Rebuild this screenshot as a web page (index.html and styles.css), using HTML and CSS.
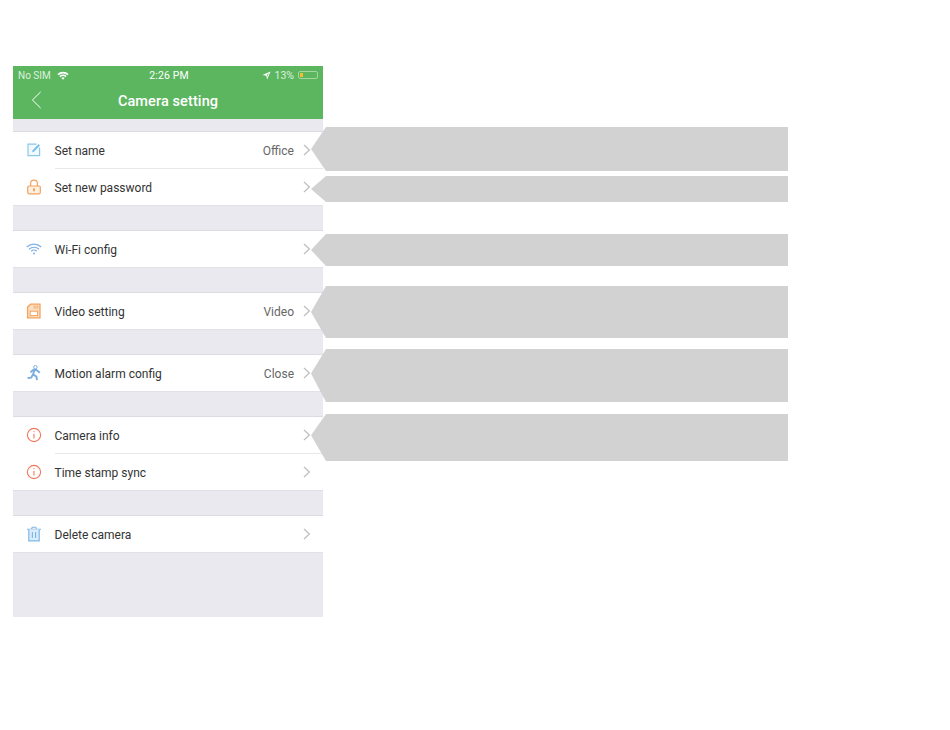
FILE: index.html
```html
<!DOCTYPE html>
<html lang="en">
<head>
    <meta charset="UTF-8">
    <meta name="viewport" content="width=device-width, initial-scale=1.0">
    <title>Camera setting</title>
    <link rel="stylesheet" href="styles.css">
</head>
<body>
    <div class="phone">
        <div class="header">
            <div class="status-bar">
                <div class="status-left">
                    <span>No SIM</span>
                    <svg class="wifi-small" width="12" height="9" viewBox="0 0 12 9">
                        <path d="M0.4 3 A8 8 0 0 1 11.6 3 L10.4 4.3 A6.3 6.3 0 0 0 1.6 4.3 Z" fill="#fff"/>
                        <path d="M2.4 5 A5.2 5.2 0 0 1 9.6 5 L8.5 6.2 A3.6 3.6 0 0 0 3.5 6.2 Z" fill="#fff"/>
                        <path d="M4.4 7 A2.4 2.4 0 0 1 7.6 7 L6 8.8 Z" fill="#fff"/>
                    </svg>
                </div>
                <div class="status-time">2:26 PM</div>
                <div class="status-right">
                    <svg width="9" height="9" viewBox="0 0 9 9">
                        <path d="M8.6 0.4 L0.4 3.9 L4.3 4.7 L5.1 8.6 Z M7 2 L5 4 L5.3 5.8 Z" fill="#fff" fill-rule="evenodd"/>
                    </svg>
                    <span>13%</span>
                    <div class="battery"><div class="battery-level"></div></div>
                </div>
            </div>
            <div class="nav-bar">
                <svg class="back" width="11" height="18" viewBox="0 0 11 18">
                    <path d="M9.6 1 L1.4 9 L9.6 17" fill="none" stroke="#fff" stroke-width="1"/>
                </svg>
                <h1>Camera setting</h1>
            </div>
        </div>

        <div class="group first">
            <div class="row">
                <svg class="icon" width="16" height="16" viewBox="0 0 16 16">
                    <path d="M10.6 2.2 H2 V13.6 H13.6 V5.4" fill="#f2f9fd" stroke="#8cc8ea" stroke-width="1.2"/>
                    <path d="M6.2 10.2 L6.6 8.2 L12.6 2 L14 3.4 L8 9.8 Z" fill="#7dbfe8"/>
                </svg>
                <div class="row-body">
                    <span class="label">Set name</span>
                    <span class="value">Office</span>
                    <svg class="chevron" width="8" height="12" viewBox="0 0 8 12"><path d="M1 1 L6.4 6 L1 11" fill="none" stroke="#bdbdc2" stroke-width="1.2"/></svg>
                </div>
            </div>
            <div class="row">
                <svg class="icon" width="16" height="16" viewBox="0 0 16 16">
                    <path d="M4.6 7 V4.6 A3.4 3.4 0 0 1 11.4 4.6 V7" fill="none" stroke="#f3a25c" stroke-width="1.2"/>
                    <rect x="1.7" y="7" width="12.6" height="7.8" rx="1.2" fill="#fdf0e2" stroke="#f3a25c" stroke-width="1.2"/>
                    <path d="M8 9.2 V12.2" stroke="#ef9445" stroke-width="1.6"/>
                </svg>
                <div class="row-body">
                    <span class="label">Set new password</span>
                    <svg class="chevron" width="8" height="12" viewBox="0 0 8 12"><path d="M1 1 L6.4 6 L1 11" fill="none" stroke="#bdbdc2" stroke-width="1.2"/></svg>
                </div>
            </div>
        </div>

        <div class="group">
            <div class="row">
                <svg class="icon" width="16" height="16" viewBox="0 0 16 16">
                    <path d="M0.8 6 A10.5 10.5 0 0 1 15.2 6" fill="none" stroke="#7fb0e6" stroke-width="1.2"/>
                    <path d="M3 8.2 A7.4 7.4 0 0 1 13 8.2" fill="none" stroke="#7fb0e6" stroke-width="1.2"/>
                    <path d="M5.2 10.3 A4 4 0 0 1 10.8 10.3" fill="none" stroke="#7fb0e6" stroke-width="1.2"/>
                    <circle cx="8" cy="12.4" r="1" fill="#7fb0e6"/>
                </svg>
                <div class="row-body">
                    <span class="label">Wi-Fi config</span>
                    <svg class="chevron" width="8" height="12" viewBox="0 0 8 12"><path d="M1 1 L6.4 6 L1 11" fill="none" stroke="#bdbdc2" stroke-width="1.2"/></svg>
                </div>
            </div>
        </div>

        <div class="group">
            <div class="row">
                <svg class="icon" width="16" height="16" viewBox="0 0 16 16">
                    <path d="M4.6 1.2 H14 V14.8 H1.6 V4 Z" fill="#fbdfc4" stroke="#f3a25c" stroke-width="1.3"/>
                    <rect x="4.2" y="8.2" width="7.4" height="4.4" fill="#fff" stroke="#f3a25c"/>
                    <path d="M8.2 2.6 V5.6 M10 2.6 V5.6 M11.8 2.6 V5.6" stroke="#f3a25c" stroke-width="0.9"/>
                </svg>
                <div class="row-body">
                    <span class="label">Video setting</span>
                    <span class="value">Video</span>
                    <svg class="chevron" width="8" height="12" viewBox="0 0 8 12"><path d="M1 1 L6.4 6 L1 11" fill="none" stroke="#bdbdc2" stroke-width="1.2"/></svg>
                </div>
            </div>
        </div>

        <div class="group">
            <div class="row">
                <svg class="icon" width="16" height="16" viewBox="0 0 16 16">
                    <circle cx="9.4" cy="2.2" r="1.7" fill="none" stroke="#7aaee0" stroke-width="1"/>
                    <path d="M4.4 7.4 L7.4 4.8 L10.4 5 L13.8 7.8 M8.6 5 L7 9.4 L10.4 11.6 L11 15.2 M7 9.6 L5.2 12.6 L1.6 13" fill="none" stroke="#7aaee0" stroke-width="1.9"/>
                </svg>
                <div class="row-body">
                    <span class="label">Motion alarm config</span>
                    <span class="value">Close</span>
                    <svg class="chevron" width="8" height="12" viewBox="0 0 8 12"><path d="M1 1 L6.4 6 L1 11" fill="none" stroke="#bdbdc2" stroke-width="1.2"/></svg>
                </div>
            </div>
        </div>

        <div class="group">
            <div class="row">
                <svg class="icon" width="16" height="16" viewBox="0 0 16 16">
                    <circle cx="8" cy="8" r="6.6" fill="none" stroke="#f0785a" stroke-width="1.1"/>
                    <path d="M8 6.8 V11.6" stroke="#f0785a" stroke-width="1.1"/>
                    <circle cx="8" cy="4.6" r="0.7" fill="#f0785a"/>
                </svg>
                <div class="row-body">
                    <span class="label">Camera info</span>
                    <svg class="chevron" width="8" height="12" viewBox="0 0 8 12"><path d="M1 1 L6.4 6 L1 11" fill="none" stroke="#bdbdc2" stroke-width="1.2"/></svg>
                </div>
            </div>
            <div class="row">
                <svg class="icon" width="16" height="16" viewBox="0 0 16 16">
                    <circle cx="8" cy="8" r="6.6" fill="none" stroke="#f0785a" stroke-width="1.1"/>
                    <path d="M8 6.8 V11.6" stroke="#f0785a" stroke-width="1.1"/>
                    <circle cx="8" cy="4.6" r="0.7" fill="#f0785a"/>
                </svg>
                <div class="row-body">
                    <span class="label">Time stamp sync</span>
                    <svg class="chevron" width="8" height="12" viewBox="0 0 8 12"><path d="M1 1 L6.4 6 L1 11" fill="none" stroke="#bdbdc2" stroke-width="1.2"/></svg>
                </div>
            </div>
        </div>

        <div class="group last">
            <div class="row">
                <svg class="icon" width="16" height="16" viewBox="0 0 16 16">
                    <path d="M1 3.2 H15 M5.6 3 L6.2 1.2 H9.8 L10.4 3" fill="none" stroke="#7db8e8" stroke-width="1.1"/>
                    <path d="M2.8 3.4 V14.8 H13.2 V3.4" fill="#dcecfa" stroke="#7db8e8" stroke-width="1.2"/>
                    <path d="M6.4 6 V12 M9.6 6 V12" stroke="#7db8e8" stroke-width="1.2"/>
                </svg>
                <div class="row-body">
                    <span class="label">Delete camera</span>
                    <svg class="chevron" width="8" height="12" viewBox="0 0 8 12"><path d="M1 1 L6.4 6 L1 11" fill="none" stroke="#bdbdc2" stroke-width="1.2"/></svg>
                </div>
            </div>
        </div>
    </div>

    <!-- grey pointers that cover the original notes -->
    <div class="callout c1"></div>
    <div class="callout c2"></div>
    <div class="callout c3"></div>
    <div class="callout c4"></div>
    <div class="callout c5"></div>
    <div class="callout c6"></div>
</body>
</html>
```

FILE: styles.css
```css
body {
    margin: 0;
    background-color: #ffffff;
    font-family: Roboto, "Liberation Sans", sans-serif;
    color: #333333;
}
.phone {
    width: 310px;
    height: 551px;
    margin: 66px 0 0 13px;
    background-color: #ebe9f0;
}
.header {
    height: 53px;
    background-color: #5cb65f;
    color: #ffffff;
}
.status-bar {
    height: 18px;
    padding: 0 5px;
    display: flex;
    align-items: center;
    justify-content: space-between;
    font-size: 10px;
    color: #dff0df;
}
.status-left, .status-right {
    width: 100px;
    display: flex;
    align-items: center;
    gap: 6px;
}
.status-right {
    justify-content: flex-end;
    gap: 4px;
}
.status-right span {
    font-size: 10.5px;
}
.status-time {
    margin-left: 2px;
    font-size: 10.5px;
    letter-spacing: 0.1px;
    color: #ffffff;
}
.battery {
    width: 20px;
    height: 8px;
    border: 1px solid #a5d6a0;
    border-radius: 2px;
    padding: 1px;
    box-sizing: border-box;
}
.battery-level {
    width: 3px;
    height: 100%;
    background-color: #f5c02c;
}
.nav-bar {
    height: 35px;
    display: flex;
    align-items: center;
    justify-content: center;
    position: relative;
}
.nav-bar h1 {
    margin: -1px 0 0;
    font-size: 14.5px;
    font-weight: 500;
    letter-spacing: 0.1px;
}
.back {
    position: absolute;
    left: 18px;
    top: 7px;
}
.group {
    margin-top: 24px;
    background-color: #ffffff;
    border-top: 1px solid #dcdbe2;
    border-bottom: 1px solid #e2e1e7;
}
.group.first {
    margin-top: 12px;
}
.row {
    height: 36px;
    display: flex;
    align-items: center;
}
.row + .row {
    height: 37px;
}
.icon {
    margin: 0 13px;
    flex-shrink: 0;
}
.row-body {
    flex: 1;
    height: 100%;
    display: flex;
    align-items: center;
    padding-right: 12px;
    box-sizing: border-box;
}
.row + .row .row-body {
    border-top: 1px solid #e8e8ec;
}
.label {
    flex: 1;
    margin-left: -0.5px;
    padding-top: 1px;
    font-size: 12px;
    color: #333333;
}
.value {
    padding-top: 1px;
    font-size: 12px;
    color: #666666;
    margin-right: 9px;
}
.callout {
    position: absolute;
    left: 311px;
    width: 477px;
    background-color: #d2d2d2;
}
.c1 { top: 127px; height: 44px; clip-path: polygon(0 50%, 15px 0, 100% 0, 100% 100%, 15px 100%); }
.c2 { top: 176px; height: 26px; clip-path: polygon(0 50%, 15px 0, 100% 0, 100% 100%, 15px 100%); }
.c3 { top: 234px; height: 32px; clip-path: polygon(0 50%, 15px 0, 100% 0, 100% 100%, 15px 100%); }
.c4 { top: 286px; height: 52px; clip-path: polygon(0 50%, 15px 0, 100% 0, 100% 100%, 15px 100%); }
.c5 { top: 349px; height: 53px; clip-path: polygon(0 46%, 15px 0, 100% 0, 100% 100%, 15px 100%); }
.c6 { top: 414px; height: 47px; clip-path: polygon(0 45%, 15px 0, 100% 0, 100% 100%, 15px 100%); }
```
